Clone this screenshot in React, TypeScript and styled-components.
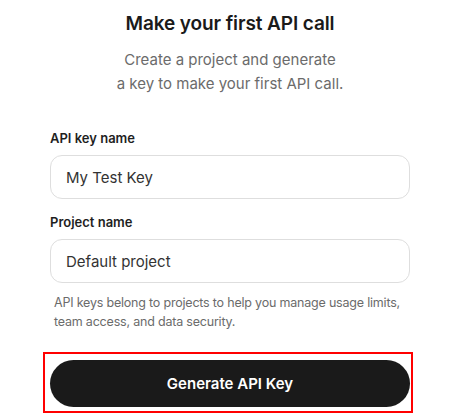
import React from 'react'
import styled, { createGlobalStyle } from 'styled-components'

const GlobalStyle = createGlobalStyle`
  html, body {
    margin: 0;
    padding: 0;
    background: #ffffff;
  }
  body {
    font-family: Inter, "Noto Sans", sans-serif;
    color: #1a1a1a;
    -webkit-font-smoothing: antialiased;
  }
`

const Panel = styled.div`
  width: 360px;
  margin-left: 50px;
  padding-top: 10px;
  display: flex;
  flex-direction: column;
`

const Title = styled.h1`
  margin: 0;
  text-align: center;
  font-size: 19px;
  line-height: 28px;
  font-weight: 600;
  letter-spacing: -0.1px;
  color: #1a1a1a;
`

const Subtitle = styled.p`
  margin: 10px 0 0;
  text-align: center;
  font-size: 15px;
  line-height: 24px;
  color: #6b6b6b;
`

const Form = styled.form`
  margin-top: 33px;
  display: flex;
  flex-direction: column;
`

const Field = styled.div`
  display: flex;
  flex-direction: column;
  gap: 8px;
  & + & {
    margin-top: 14px;
  }
`

const Label = styled.label`
  font-size: 13px;
  line-height: 18px;
  font-weight: 600;
  color: #1f1f1f;
`

const Input = styled.input`
  box-sizing: border-box;
  width: 100%;
  height: 44px;
  padding: 0 15px;
  border: 1px solid #dedede;
  border-radius: 12px;
  font-family: inherit;
  font-size: 15px;
  color: #333333;
  background: #ffffff;
  outline: none;
`

const Hint = styled.p`
  margin: 10px 0 0;
  padding: 0 4px;
  font-size: 12.5px;
  line-height: 19px;
  letter-spacing: -0.2px;
  color: #6b6b6b;
`

/* red highlight frame around the primary action */
const Highlight = styled.div`
  box-sizing: border-box;
  width: 370px;
  margin: 21px 0 0 -7px;
  padding: 6px 0 4px 5px;
  border: 2px solid #ff0000;
`

const Button = styled.button`
  display: block;
  width: 360px;
  height: 47px;
  border: none;
  border-radius: 24px;
  background: #1a1a1a;
  color: #ffffff;
  font-family: inherit;
  font-size: 15px;
  font-weight: 600;
  cursor: pointer;
`

export default function App() {
  return (
    <>
      <GlobalStyle />
      <Panel>
        <Title>Make your first API call</Title>
        <Subtitle>
          Create a project and generate
          <br />
          a key to make your first API call.
        </Subtitle>
        <Form onSubmit={e => e.preventDefault()}>
          <Field>
            <Label htmlFor="key-name">API key name</Label>
            <Input id="key-name" defaultValue="My Test Key" />
          </Field>
          <Field>
            <Label htmlFor="project-name">Project name</Label>
            <Input id="project-name" defaultValue="Default project" />
          </Field>
          <Hint>
            API keys belong to projects to help you manage usage limits,
            team access, and data security.
          </Hint>
          <Highlight>
            <Button type="submit">Generate API Key</Button>
          </Highlight>
        </Form>
      </Panel>
    </>
  )
}
